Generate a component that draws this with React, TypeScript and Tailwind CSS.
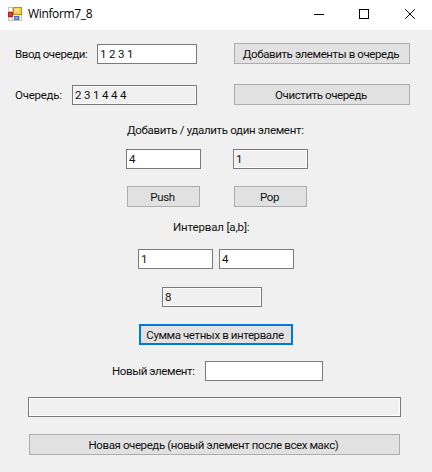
import type { ReactNode } from "react";

type FieldProps = { value?: string; className: string; readOnly?: boolean };

function Field({ value = "", className, readOnly = false }: FieldProps) {
  return (
    <input
      defaultValue={value}
      readOnly={readOnly}
      className={`block h-5 shrink-0 rounded-none border border-[#7a7a7a] pl-0.5 leading-4 tracking-[-0.15px] text-[#111] outline-none ${
        readOnly ? "bg-[#f0f0f0] shadow-[inset_0_0_0_1px_#ffffff]" : "bg-white"
      } ${className}`}
    />
  );
}

function Button({ children, className, focused = false }: { children: ReactNode; className: string; focused?: boolean }) {
  return (
    <button
      className={`flex h-[21px] shrink-0 items-center justify-center whitespace-nowrap bg-[#e1e1e1] pt-px pr-0.5 text-[#111] ${
        focused ? "border-2 border-[#0078d7]" : "border border-[#adadad]"
      } ${className}`}
    >
      {children}
    </button>
  );
}

function AppIcon() {
  return (
    <svg width="16" height="16" viewBox="0 0 16 16" className="mr-[5px] ml-[7px]" shapeRendering="crispEdges">
      <path d="M1.5 1.5h13v13h-13zM5.5 1v13M1 5.5h6M1 11.5h5M12.5 9v5" fill="#fff" stroke="#c4c4c4" />
      <rect x="6" y="1" width="9" height="8" fill="#c08a1c" />
      <rect x="7" y="2" width="7" height="6" fill="#f9cd4e" />
      <rect x="8" y="3" width="4" height="3" fill="#ffe591" />
      <rect x="1" y="6" width="5" height="5" fill="#a8231c" />
      <rect x="2" y="7" width="3" height="3" fill="#cf4439" />
      <rect x="7" y="10" width="5" height="4" fill="#3f72d0" />
      <rect x="8" y="11" width="3" height="2" fill="#7eaaf5" />
    </svg>
  );
}

function TitleBar() {
  return (
    <header className="flex h-[30px] items-center bg-white pb-0.5">
      <AppIcon />
      <span className="flex-1 font-['Open_Sans',sans-serif] text-[12px] leading-4 tracking-[-0.35px] text-black">Winform7_8</span>
      <svg width="102" height="10" viewBox="0 0 102 10" className="mr-[16px]" fill="none" stroke="#000">
        <path d="M0 5.5h10M45.5.5h9v9h-9z" shapeRendering="crispEdges" />
        <path d="M91.2.2l9.6 9.6M100.8.2l-9.6 9.6" />
      </svg>
    </header>
  );
}

export default function App() {
  return (
    <div className="h-[472px] w-[432px] overflow-hidden bg-[#f0f0f0] font-['Roboto','Liberation_Sans',sans-serif] text-[11.5px] leading-4 tracking-[-0.4px] text-[#111]">
      <TitleBar />
      <main className="flex flex-col">
        <div className="mt-[13px] flex h-[21px] items-end pl-[15px]">
          <label className="mb-0.5 w-[82px] whitespace-nowrap">Ввод очереди:</label>
          <Field value="1 2 3 1" className="w-[100px]" />
          <Button className="ml-[37px] w-[176px]">Добавить элементы в очередь</Button>
        </div>
        <div className="mt-5 flex h-[21px] items-end pl-[15px]">
          <label className="mb-0.5 w-[57px] tracking-[-0.25px] whitespace-nowrap">Очередь:</label>
          <Field value="2 3 1 4 4 4" readOnly className="w-[125px]" />
          <Button className="ml-[37px] w-[176px]">Очистить очередь</Button>
        </div>
        <div className="mt-[17px] pl-[127px] tracking-[-0.33px] whitespace-nowrap">Добавить / удалить один элемент:</div>
        <div className="mt-[11px] flex gap-8 pl-[126px]">
          <Field value="4" className="w-[75px]" />
          <Field value="1" readOnly className="w-[75px]" />
        </div>
        <div className="mt-[17px] flex gap-[34px] pl-[127px]">
          <Button className="w-[73px]">Push</Button>
          <Button className="w-[73px]">Pop</Button>
        </div>
        <div className="mt-3 pl-[173px] tracking-[-0.15px]">Интервал [a,b]:</div>
        <div className="mt-[14px] flex gap-1.5 pl-[138px]">
          <Field value="1" className="w-[75px]" />
          <Field value="4" className="w-[75px]" />
        </div>
        <Field value="8" readOnly className="mt-[18px] ml-[162px] w-[100px]" />
        <Button focused className="mt-[17px] ml-[139px] w-[154px]">Сумма четных в интервале</Button>
        <div className="mt-4 flex items-center pl-[112px]">
          <label className="w-[93px] whitespace-nowrap">Новый элемент:</label>
          <Field className="w-[118px]" />
        </div>
        <Field readOnly className="mt-4 ml-7 w-[373px]" />
        <Button className="mt-[17px] ml-[29px] w-[371px]">Новая очередь (новый элемент после всех макс)</Button>
      </main>
    </div>
  );
}
